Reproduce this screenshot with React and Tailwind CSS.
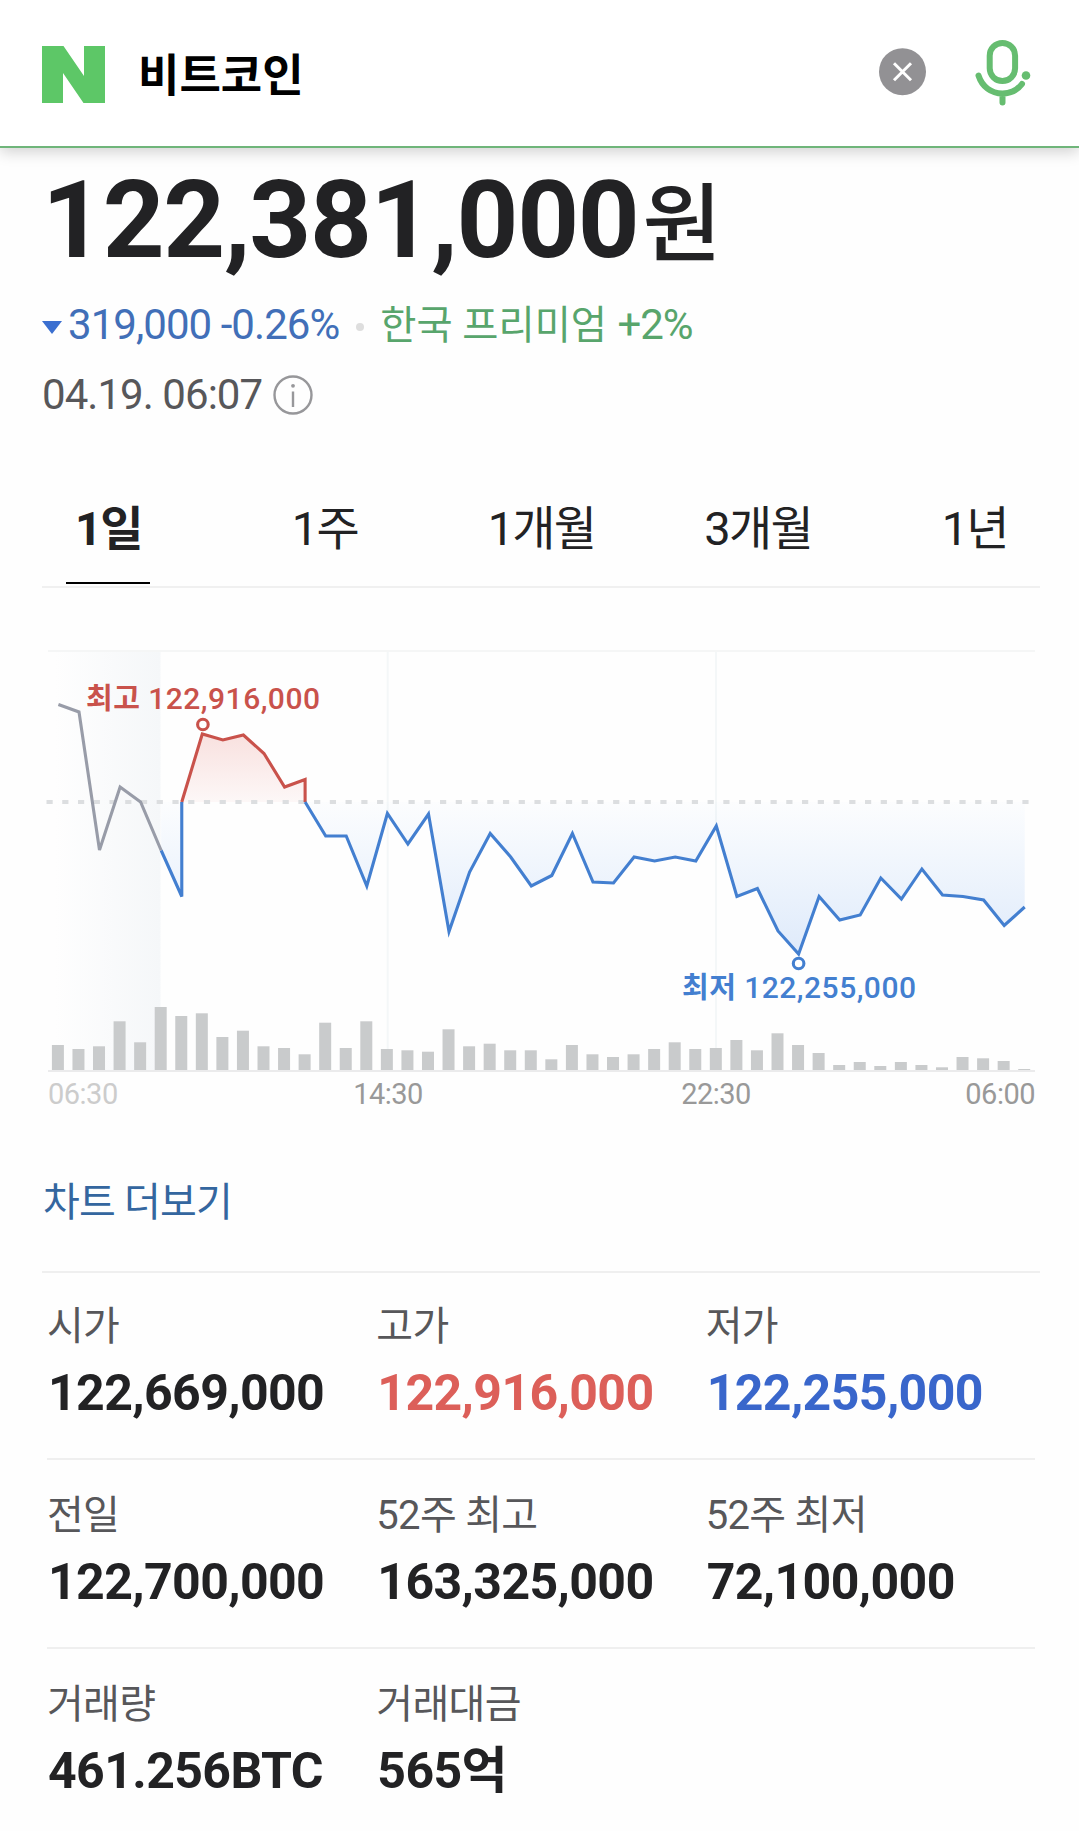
import { useState } from 'react';

const tabs = [
  { id: 'day', label: '1일' },
  { id: 'week', label: '1주' },
  { id: 'month', label: '1개월' },
  { id: 'quarter', label: '3개월' },
  { id: 'year', label: '1년' },
];

const stats = [
  [
    { label: '시가', value: '122,669,000' },
    { label: '고가', value: '122,916,000', color: 'text-[#dc5f59]' },
    { label: '저가', value: '122,255,000', color: 'text-[#3966cb]' },
  ],
  [
    { label: '전일', value: '122,700,000' },
    { label: '52주 최고', value: '163,325,000' },
    { label: '52주 최저', value: '72,100,000' },
  ],
  [
    { label: '거래량', value: '461.256BTC' },
    { label: '거래대금', value: '565억' },
  ],
];

// y positions of the price line, one point per half hour
const prices = [
  704.5, 712, 850, 787, 802, 850.5, 896.5, 734, 740, 735, 753.5, 787, 779.5, 836, 836, 886,
  813.5, 844, 814, 931.5, 872, 833.5, 857, 886, 875.5, 833.5, 882, 883, 857, 861, 857, 861,
  826, 896.5, 888.5, 931, 954, 896.5, 920, 915, 878, 899, 869, 895, 896.5, 900, 925.5, 907,
];

const volumes = [
  25, 21, 23.7, 48.7, 27.7, 63, 54, 56.7, 33, 39.3, 23.7, 22, 15.7, 47.3, 22, 48.7,
  21, 19.7, 18.3, 40.7, 23.7, 26.3, 19.7, 19.7, 10.7, 25, 15.7, 13, 15.7, 21, 27.7, 21,
  22, 30, 19.7, 36.7, 25, 17, 5, 8, 4, 8, 5, 2.7, 13, 11.7, 9, 1,
];

const BASE = 802;
const xAt = (i) => 58.4 + i * 20.56;
const points = (from, to) =>
  prices.slice(from, to + 1).map((y, i) => `${xAt(from + i).toFixed(1)},${y}`).join(' ');

const grayLine = points(0, 5);
const dropLine = `${points(5, 6)} ${xAt(6)},${BASE}`;
const redLine = `${xAt(6)},${BASE} ${points(7, 12)} ${xAt(12)},${BASE}`;
const blueLine = `${xAt(12)},${BASE} ${points(13, 47)}`;

function Logo() {
  return (
    <svg width="63" height="57" viewBox="0 0 63 57">
      <path d="M0 0h21.500L42 30V0h21v57H41.500L21 27v30H0z" fill="#5dc767" />
    </svg>
  );
}

function ClearIcon() {
  return (
    <svg width="48" height="48" viewBox="0 0 48 48">
      <circle cx="23.500" cy="23.700" r="23.500" fill="#929194" />
      <path d="M15 15.200l17 17M32 15.200l-17 17" stroke="#fff" strokeWidth="3" />
    </svg>
  );
}

function MicIcon() {
  return (
    <svg width="60" height="70" viewBox="0 0 60 70" fill="none" stroke="#66bd70" strokeWidth="6" strokeLinecap="round">
      <rect x="17.700" y="5" width="25.400" height="38" rx="12.700" />
      <path d="M6.500 37.500C10 48.500 19 55.500 30.500 55.500c8 0 15-3.500 19.500-9.500M30.500 56v8.500" />
      <circle cx="54" cy="37.500" r="4.300" fill="#66bd70" stroke="none" />
    </svg>
  );
}

function PriceChart() {
  return (
    <svg width="1079" height="490" viewBox="0 640 1079 490" className="block">
      <defs>
        <linearGradient id="prev" x1="0" x2="1" y1="0" y2="0">
          <stop offset="0" stopColor="#fefefe" />
          <stop offset="1" stopColor="#f5f7f9" />
        </linearGradient>
        <linearGradient id="up" x1="0" x2="0" y1="734" y2="802" gradientUnits="userSpaceOnUse">
          <stop offset="0" stopColor="#e05a50" stopOpacity="0.18" />
          <stop offset="1" stopColor="#e05a50" stopOpacity="0.04" />
        </linearGradient>
        <linearGradient id="down" x1="0" x2="0" y1="802" y2="954" gradientUnits="userSpaceOnUse">
          <stop offset="0" stopColor="#3b8cf0" stopOpacity="0.01" />
          <stop offset="1" stopColor="#3b82e8" stopOpacity="0.16" />
        </linearGradient>
      </defs>

      <rect x="55" y="652" width="105.500" height="418" fill="url(#prev)" />
      <path d="M48 651H1035" stroke="#f5f6f6" strokeWidth="2" />
      <path d="M387.700 652V1070M716 652V1070" stroke="#f4f7f8" strokeWidth="2" />
      <path d="M48 1071H1035" stroke="#ebebec" strokeWidth="2" />

      {volumes.map((h, i) => (
        <rect key={i} x={xAt(i) - 6.5} y={1070 - h} width="12" height={h} fill="#c9cbcc" />
      ))}

      <polygon points={`${xAt(5)},${BASE} ${dropLine}`} fill="url(#down)" />
      <polygon points={redLine} fill="url(#up)" />
      <polygon points={`${blueLine} ${xAt(47)},${BASE}`} fill="url(#down)" />
      <path d="M46.500 802H1029" stroke="#dcdee0" strokeWidth="3.800" strokeDasharray="6.200 9.540" />

      <g fill="none" strokeWidth="3.100" strokeLinejoin="miter">
        <polyline points={grayLine} stroke="#989ca8" />
        <polyline points={redLine} stroke="#c9524b" />
        <polyline points={dropLine} stroke="#437fd0" />
        <polyline points={blueLine} stroke="#437fd0" />
        <circle cx="202.900" cy="724.500" r="5.300" stroke="#c9524b" fill="#fff" />
        <circle cx="798.600" cy="963.500" r="5.300" stroke="#437fd0" fill="#fff" />
      </g>

      <g fontSize="30" fontWeight="500">
        <text x="86" y="708.500" fill="#c9524b" textLength="234">
          <tspan fontWeight="700" fontSize="29">최고</tspan> 122,916,000
        </text>
        <text x="682" y="997.500" fill="#437fd0" textLength="234">
          <tspan fontWeight="700" fontSize="29">최저</tspan> 122,255,000
        </text>
      </g>
      <g fontSize="29" fill="#999" letterSpacing="-0.5">
        <text x="48" y="1104" fill="#ccc">06:30</text>
        <text x="388" y="1104" textAnchor="middle">14:30</text>
        <text x="716" y="1104" textAnchor="middle">22:30</text>
        <text x="1035" y="1104" textAnchor="end">06:00</text>
      </g>
    </svg>
  );
}

export default function App() {
  const [activeTab, setActiveTab] = useState('day');

  return (
    <div className="h-[1831px] w-[1079px] overflow-hidden bg-[#fefefe] font-['Roboto','Noto_Sans_CJK_KR',sans-serif] text-[#222224]">
      {/* Search header */}
      <header className="flex h-[148px] items-start border-b-2 border-[#6fb57a] bg-white pl-[42px] shadow-[0_4px_14px_rgba(0,0,0,0.18)]">
        <div className="mt-[46px]">
          <Logo />
        </div>
        <span className="mt-[47px] ml-[33px] flex-1 text-[45px] leading-[60px] font-bold text-black">비트코인</span>
        <button className="mt-[48px] mr-[45px]">
          <ClearIcon />
        </button>
        <button className="mt-[38px] mr-[47px]">
          <MicIcon />
        </button>
      </header>

      {/* Current price */}
      <section className="px-[42px] pt-[22px]">
        <div className="flex h-[120px] items-start whitespace-nowrap">
          <strong className="text-[108px] leading-[100px] font-bold tracking-[-1.3px]">122,381,000</strong>
          <span className="mt-[6px] ml-1 text-[86px] leading-[100px] font-medium">원</span>
        </div>
        <div className="flex h-[70px] items-center text-[42px] leading-[70px] whitespace-nowrap">
          <span className="mt-1 mr-[6px] border-x-[10px] border-t-[13px] border-x-transparent border-t-[#3b6fd0]"></span>
          <span className="tracking-[-0.95px] text-[#416fb8]">319,000 -0.26%</span>
          <span className="mt-1 mr-4 ml-[17px] h-2 w-2 rounded-full bg-[#dedede]"></span>
          <span className="text-[#58a56c]">
            <span className="text-[39.3px]">한국 프리미엄</span> <span className="tracking-[-1px]">+2%</span>
          </span>
        </div>
        <div className="flex h-[70px] items-center text-[42px] leading-[70px] text-[#57575a]">
          <span className="tracking-[-0.95px]">04.19. 06:07</span>
          <svg className="ml-[11px]" width="40" height="40" viewBox="0 0 40 40" fill="none" stroke="#97979a">
            <circle cx="20" cy="20" r="18.500" strokeWidth="2.400" />
            <path d="M20 16.500V32" strokeWidth="2.400" />
            <circle cx="20" cy="10.800" r="1.900" fill="#97979a" stroke="none" />
          </svg>
        </div>
      </section>

      {/* Period tabs */}
      <nav className="pt-[57px]">
        <div className="-mr-[4px] grid h-[99px] grid-cols-5 text-center text-[47px] leading-[84px] tracking-[-1.8px]">
          {tabs.map((tab) => (
            <button
              key={tab.id}
              onClick={() => setActiveTab(tab.id)}
              className={activeTab === tab.id ? 'flex flex-col items-center font-bold' : 'flex flex-col items-center'}
            >
              <span>{tab.label}</span>
              {activeTab === tab.id && <span className="mt-[11px] h-[2px] w-[84px] bg-black"></span>}
            </button>
          ))}
        </div>
        <div className="mr-[39px] ml-[42px] h-[2px] bg-[#f0f0f0]"></div>
      </nav>

      <section className="pt-[52px]">
        <PriceChart />
      </section>

      <div className="mr-[39px] ml-[42px] h-[143px] border-b-2 border-[#efefef] pt-[45px]">
        <a href="#" className="pl-px text-[40px] leading-[56px] tracking-[-0.8px] text-[#34669f]">차트 더보기</a>
      </div>

      {/* Quote summary */}
      <dl className="mr-[44px] ml-[47px]">
        {stats.map((row, i) => (
          <div
            key={i}
            className="grid h-[189px] grid-cols-3 border-b-2 border-[#efefef] pt-[28px] first:h-[187px] first:pt-[26px] last:border-0"
          >
            {row.map((item) => (
              <div key={item.label}>
                <dt className="text-[40px] leading-[56px] tracking-[-0.7px] text-[#57575a]">{item.label}</dt>
                <dd className={`pl-px text-[50px] leading-[76px] font-bold tracking-[-0.6px] ${item.color || ''}`}>
                  {item.value}
                </dd>
              </div>
            ))}
          </div>
        ))}
      </dl>
    </div>
  );
}
